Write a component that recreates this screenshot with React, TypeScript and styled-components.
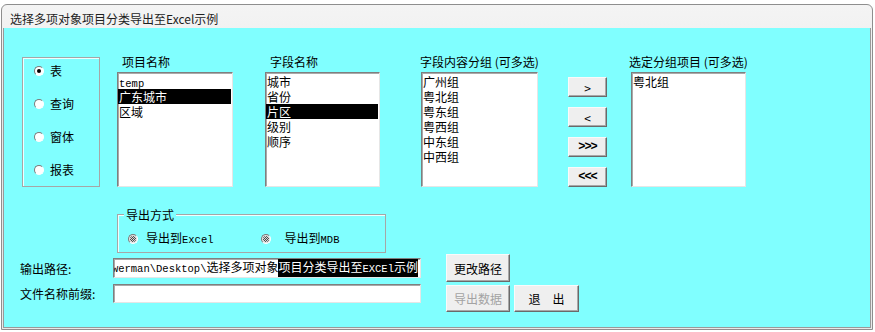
import styled, { createGlobalStyle } from 'styled-components';

const CJK = `"Noto Sans CJK SC", "Noto Sans", sans-serif`;
const MONO = `"Liberation Mono", "DejaVu Sans Mono", "Noto Sans CJK SC", monospace`;

const GlobalStyle = createGlobalStyle`
  html, body {
    margin: 0;
    padding: 0;
    background: #ffffff;
  }
  body {
    font-family: ${CJK};
    font-size: 12px;
    color: #000;
  }
  * {
    box-sizing: border-box;
  }
`;

const Page = styled.div`
  width: 875px;
  height: 332px;
  padding: 4px 2px 2px 1px;
`;

const Window = styled.div`
  height: 100%;
  display: flex;
  flex-direction: column;
  border: 1px solid #8e8e8e;
  border-radius: 6px 6px 0 0;
  background: linear-gradient(#f4f4f4, #e6e6e6 40%, #e9e9e9);
`;

const TitleBar = styled.div`
  height: 23px;
  flex: none;
  padding: 4px 0 0 8px;
  line-height: 19px;
  color: #1e1e1e;
  white-space: nowrap;
`;

const Panel = styled.div`
  flex: 1;
  margin: 0 1px 1px 1px;
  background: #80ffff;
  border: 1px solid #9a9a9a;
  border-top: none;
  padding: 26px 0 0 16px;
`;

const TopRow = styled.div`
  display: flex;
  align-items: flex-start;
`;

const RadioBox = styled.div`
  margin: 3px 0 0 2px;
  width: 78px;
  height: 130px;
  border: 1px solid #a6a6a6;
  box-shadow: inset 1px 1px 0 #eeffff;
  display: flex;
  flex-direction: column;
  justify-content: space-between;
  padding: 6px 0 9px 11px;
`;

const RadioOption = styled.label<{ $gap: number }>`
  display: flex;
  align-items: center;
  gap: ${(p) => p.$gap}px;
  height: 14px;
  line-height: 14px;
  white-space: nowrap;
`;

const RadioDot = styled.span<{ $checked?: boolean; $mixed?: boolean }>`
  position: relative;
  flex: none;
  width: 10px;
  height: 10px;
  border-radius: 50%;
  background: ${(p) => (p.$mixed ? '#e2e2e2' : '#ffffff')};
  border: 1px solid;
  border-color: #7a7a7a #ffffff #ffffff #7a7a7a;

  &::after {
    content: '';
    position: absolute;
    left: ${(p) => (p.$mixed ? 1 : 2)}px;
    top: ${(p) => (p.$mixed ? 1 : 2)}px;
    width: ${(p) => (p.$mixed ? 6 : 4)}px;
    height: ${(p) => (p.$mixed ? 6 : 4)}px;
    border-radius: 50%;
    background: ${(p) =>
      p.$mixed
        ? 'repeating-conic-gradient(#4a4a4a 0 25%, #d6d6d6 0 50%) 0 0 / 2px 2px'
        : p.$checked
        ? '#000'
        : 'transparent'};
  }
`;

const Column = styled.div<{ $gap: number; $width: number }>`
  margin-left: ${(p) => p.$gap}px;
  width: ${(p) => p.$width}px;
  display: flex;
  flex-direction: column;
`;

const ColLabel = styled.div<{ $indent: number }>`
  margin-left: ${(p) => p.$indent}px;
  height: 15px;
  line-height: 15px;
  margin-bottom: 3px;
  white-space: nowrap;
`;

const ListBox = styled.div`
  height: 115px;
  background: #ffffff;
  border: 1px solid;
  border-color: #7f7f7f #e6e6e6 #e6e6e6 #7f7f7f;
  box-shadow: inset 1px 1px 0 #a9a9a9;
  padding: 1px 1px 0 0;
  overflow: hidden;
`;

const ListItem = styled.div<{ $selected?: boolean }>`
  height: 15px;
  line-height: 15px;
  padding-left: 1px;
  white-space: nowrap;
  background: ${(p) => (p.$selected ? '#000' : 'transparent')};
  color: ${(p) => (p.$selected ? '#fff' : '#000')};
`;

const Mono = styled.span`
  font-family: ${MONO};
  font-size: 10.5px;
`;

const ArrowColumn = styled.div`
  margin: 23px 0 0 30px;
  display: flex;
  flex-direction: column;
  gap: 10px;
`;

const Button = styled.button<{ $w: number; $h: number; $mono?: boolean }>`
  width: ${(p) => p.$w}px;
  height: ${(p) => p.$h}px;
  padding: 0;
  margin: 0;
  background: #efefef;
  border: 1px solid;
  border-color: #fafafa #6a6a6a #6a6a6a #fafafa;
  box-shadow: inset -1px -1px 0 #a8a8a8;
  font-family: ${(p) => (p.$mono ? MONO : CJK)};
  font-size: ${(p) => (p.$mono ? '12px' : '12px')};
  font-weight: ${(p) => (p.$mono ? 700 : 400)};
  color: #000;
  white-space: pre;
  letter-spacing: ${(p) => (p.$mono ? '-1px' : '0')};

  &:disabled {
    color: #a3a3a3;
  }
`;

const ExportGroup = styled.div`
  position: relative;
  margin: 27px 0 0 97px;
  width: 269px;
  height: 39px;
  border: 1px solid #a6a6a6;
  box-shadow: inset 1px 1px 0 #eeffff;
  display: flex;
  align-items: center;
  padding: 10px 0 0 10px;
`;

const Legend = styled.span`
  position: absolute;
  left: 6px;
  top: -8px;
  padding: 0 2px;
  line-height: 15px;
  background: #80ffff;
`;

const ExportSpacer = styled.div`
  width: 47px;
`;

const BottomRow = styled.div`
  display: flex;
  align-items: flex-start;
  margin-top: 1px;
`;

const Fields = styled.div`
  padding-top: 4px;
  display: flex;
  flex-direction: column;
  gap: 6px;
`;

const FieldRow = styled.div<{ $h: number }>`
  display: flex;
  align-items: center;
  height: ${(p) => p.$h}px;
`;

const FieldLabel = styled.div`
  width: 93px;
  white-space: nowrap;
`;

const TextBox = styled.div`
  width: 308px;
  height: 100%;
  background: #ffffff;
  border: 1px solid;
  border-color: #7f7f7f #e6e6e6 #e6e6e6 #7f7f7f;
  box-shadow: inset 1px 1px 0 #a9a9a9;
  display: flex;
  align-items: center;
  justify-content: flex-end;
  overflow: hidden;
  padding-right: 2px;
`;

const PathText = styled.span`
  flex: none;
  white-space: nowrap;
  line-height: 16px;
`;

const Highlight = styled.span`
  display: inline-block;
  line-height: 16px;
  background: #000;
  color: #fff;
`;

const ButtonStack = styled.div`
  margin-left: 25px;
  display: flex;
  flex-direction: column;
  gap: 3px;
`;

const ButtonRow = styled.div`
  display: flex;
  gap: 4px;
`;

const objectTypes = ['表', '查询', '窗体', '报表'];
const projects = ['temp', '广东城市', '区域'];
const fields = ['城市', '省份', '片区', '级别', '顺序'];
const groups = ['广州组', '粤北组', '粤东组', '粤西组', '中东组', '中西组'];
const chosen = ['粤北组'];

export default function App() {
  return (
    <>
      <GlobalStyle />
      <Page>
        <Window>
          <TitleBar>选择多项对象项目分类导出至Excel示例</TitleBar>
          <Panel>
            <TopRow>
              <RadioBox>
                {objectTypes.map((t, i) => (
                  <RadioOption key={t} $gap={6}>
                    <RadioDot $checked={i === 0} />
                    {t}
                  </RadioOption>
                ))}
              </RadioBox>

              <Column $gap={17} $width={116}>
                <ColLabel $indent={5}>项目名称</ColLabel>
                <ListBox>
                  {projects.map((p) => (
                    <ListItem key={p} $selected={p === '广东城市'}>
                      {p === 'temp' ? <Mono>temp</Mono> : p}
                    </ListItem>
                  ))}
                </ListBox>
              </Column>

              <Column $gap={32} $width={115}>
                <ColLabel $indent={5}>字段名称</ColLabel>
                <ListBox>
                  {fields.map((f) => (
                    <ListItem key={f} $selected={f === '片区'}>
                      {f}
                    </ListItem>
                  ))}
                </ListBox>
              </Column>

              <Column $gap={41} $width={117}>
                <ColLabel $indent={-1}>字段内容分组 (可多选)</ColLabel>
                <ListBox>
                  {groups.map((g) => (
                    <ListItem key={g}>{g}</ListItem>
                  ))}
                </ListBox>
              </Column>

              <ArrowColumn>
                <Button $w={39} $h={20}>&gt;</Button>
                <Button $w={39} $h={20}>&lt;</Button>
                <Button $w={39} $h={20} $mono>&gt;&gt;&gt;</Button>
                <Button $w={39} $h={20} $mono>&lt;&lt;&lt;</Button>
              </ArrowColumn>

              <Column $gap={24} $width={115}>
                <ColLabel $indent={-2}>选定分组项目 (可多选)</ColLabel>
                <ListBox>
                  {chosen.map((c) => (
                    <ListItem key={c}>{c}</ListItem>
                  ))}
                </ListBox>
              </Column>
            </TopRow>

            <ExportGroup>
              <Legend>导出方式</Legend>
              <RadioOption $gap={8}>
                <RadioDot $mixed />
                <span>
                  导出到<Mono>Excel</Mono>
                </span>
              </RadioOption>
              <ExportSpacer />
              <RadioOption $gap={14}>
                <RadioDot $mixed />
                <span>
                  导出到<Mono>MDB</Mono>
                </span>
              </RadioOption>
            </ExportGroup>

            <BottomRow>
              <Fields>
                <FieldRow $h={20}>
                  <FieldLabel>输出路径:</FieldLabel>
                  <TextBox>
                    <PathText>
                      <Mono>C:\Users\Powerman\Desktop\</Mono>选择多项对象
                      <Highlight>
                        项目分类导出至<Mono>EXCEl</Mono>示例
                      </Highlight>
                    </PathText>
                  </TextBox>
                </FieldRow>
                <FieldRow $h={19}>
                  <FieldLabel>文件名称前缀:</FieldLabel>
                  <TextBox />
                </FieldRow>
              </Fields>

              <ButtonStack>
                <Button $w={64} $h={28}>更改路径</Button>
                <ButtonRow>
                  <Button $w={64} $h={27} disabled>
                    导出数据
                  </Button>
                  <Button $w={65} $h={27}>退　出</Button>
                </ButtonRow>
              </ButtonStack>
            </BottomRow>
          </Panel>
        </Window>
      </Page>
    </>
  );
}
